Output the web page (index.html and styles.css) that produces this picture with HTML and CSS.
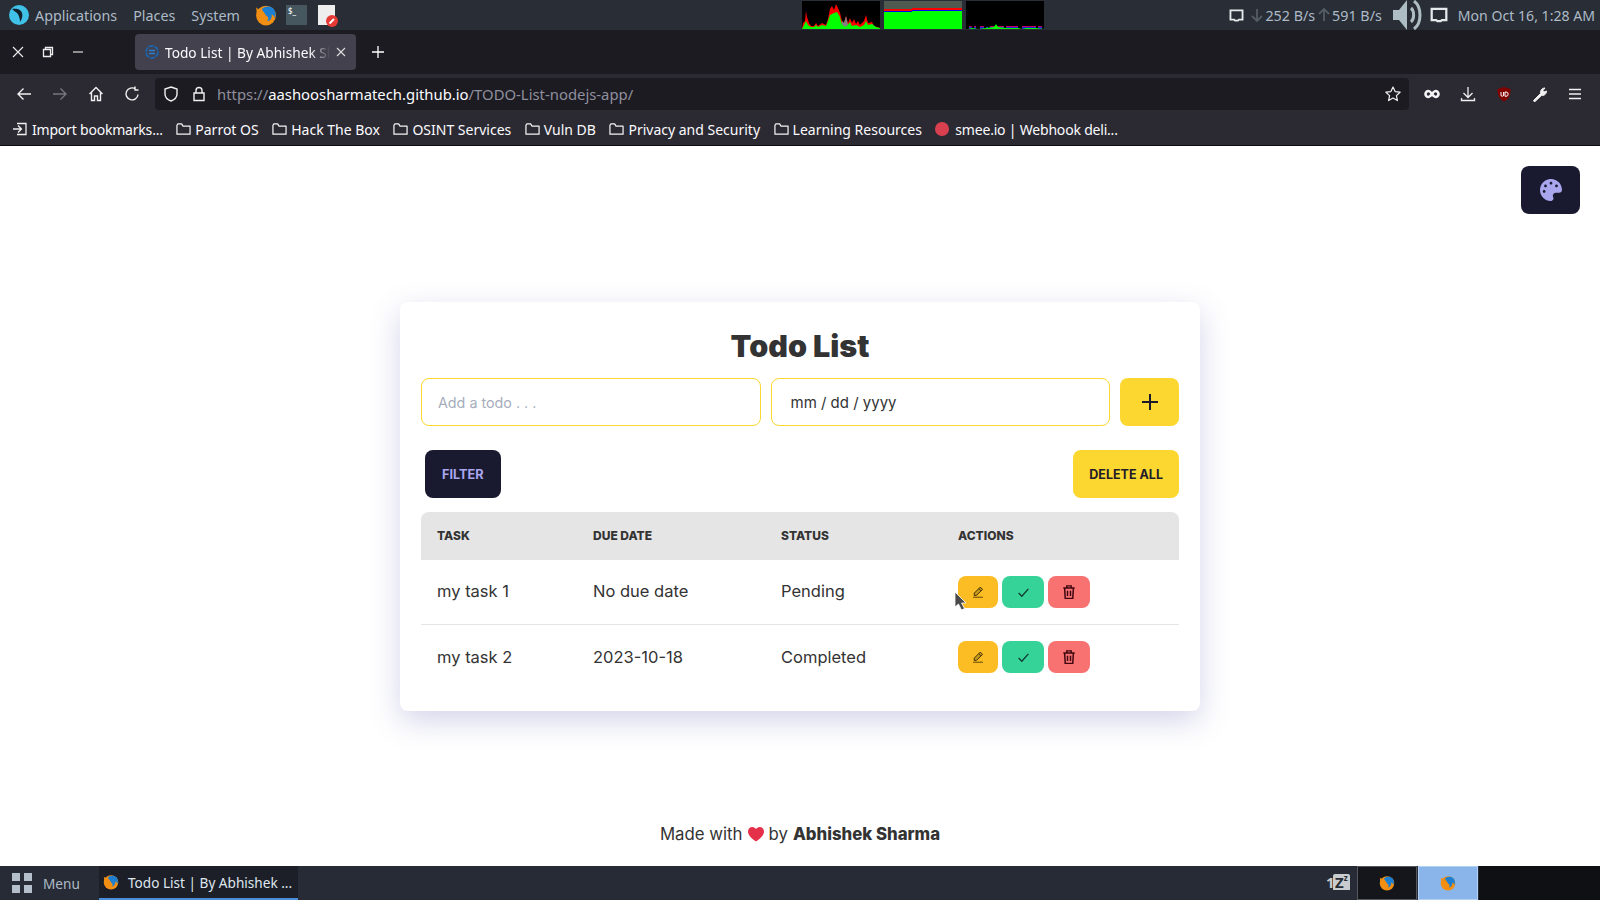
FILE: index.html
```html
<!DOCTYPE html>
<html lang="en">
<head>
  <meta charset="UTF-8" />
  <title>Todo List | By Abhishek Sharma</title>
  <link rel="stylesheet" href="styles.css">
</head>
<body>

  <svg class="defs" width="0" height="0">
    <symbol id="fox" viewBox="0 0 20 20">
      <circle cx="10" cy="10.500" r="9" fill="#f28f13"/>
      <path d="M6 5c2-3 8-4 11-.5 2 2.500 2 6 1 8-1-2-2-3-3-3 1 3-1 6-4 6 2-2 1-4-1-5-1-2-2-3-4-5.500z" fill="#1d7fd1"/>
      <path d="M1 3l3 3 3-1-2 4-3 2z" fill="#f28f13"/>
    </symbol>
    <symbol id="folder" viewBox="0 0 16 14">
      <path d="M1 3v9.500h14V4H7.500L6 1.500H2z" fill="none" stroke="#f5f5f5" stroke-width="1.300" stroke-linejoin="round"/>
    </symbol>
    <symbol id="screen" viewBox="0 0 16 14">
      <path d="M1.500 1.500h13v10h-4l-1 1h-3l-1-1h-4z" fill="none" stroke="#e6e9ec" stroke-width="2"/>
    </symbol>
    <symbol id="pen" viewBox="0 0 16 16">
      <path d="M11 1.500l3 3-8 8H3v-3z" fill="#c79a1d" stroke="#3a2a08" stroke-width="1.300" stroke-linejoin="round"/>
      <path d="M9 3.500l3 3" stroke="#3a2a08" stroke-width="1.200"/>
      <path d="M1.500 15h13" stroke="#7a5a0c" stroke-width="1.600"/>
    </symbol>
    <symbol id="tick" viewBox="0 0 16 16">
      <path d="M2 8.500l4 4L14 3.500" fill="none" stroke="#123d33" stroke-width="1.700"/>
    </symbol>
    <symbol id="trash" viewBox="0 0 16 16">
      <path d="M1.500 3.500h13M5.500 3.500V1h5v2.500M3 3.500l.7 12h8.600l.7-12M6.300 6.500v6M9.700 6.500v6" fill="none" stroke="#3f0710" stroke-width="1.700"/>
    </symbol>
    <symbol id="arrow" viewBox="0 0 12 14">
      <path d="M6 1v12M1 8l5 5 5-5" fill="none" stroke="#555c62" stroke-width="1.800"/>
    </symbol>
  </svg>

  <div class="panel">
    <div class="panel-left">
      <svg class="parrot" viewBox="0 0 20 20" width="20" height="20">
        <circle cx="10" cy="10" r="10" fill="#3fc1e8"/>
        <path d="M3 4c4-1 9 0 10 4 1 3 0 6-2 9 0-3-1-7-3-9-1-1-3-2-5-4z" fill="#14212b"/>
      </svg>
      <span>Applications</span>
      <span>Places</span>
      <span>System</span>
      <svg width="22" height="22"><use href="#fox"/></svg>
      <div class="term">$_</div>
      <div class="note">
        <svg class="note-badge" width="12" height="12" viewBox="0 0 12 12">
          <circle cx="6" cy="6" r="6" fill="#e53935"/>
          <path d="M3.500 8.500L8 4" stroke="#fff" stroke-width="2"/>
        </svg>
      </div>
    </div>
    <div class="graphs">
      <svg class="graph" viewBox="0 0 78 28" preserveAspectRatio="none">
        <polygon fill="#f00" points="0,28 1,22 3,20 4,10 5,16 7,22 9,25 12,25 14,22 16,25 20,22 24,24 26,18 28,8 30,5 32,9 34,3 36,7 38,12 40,20 42,22 44,15 46,22 48,17 50,22 52,18 54,23 56,20 58,24 62,20 64,14 66,22 70,21 72,25 78,27 78,28"/>
        <polygon fill="#808080" points="38,28 40,20 42,22 44,15 46,24 48,28"/>
        <polygon fill="#0f0" points="0,28 2,24 4,20 6,24 9,26 12,26 14,24 16,26 20,24 24,25 26,20 28,14 32,12 35,11 38,16 40,24 44,26 48,21 50,25 54,24 58,26 62,24 64,20 66,24 70,23 74,26 78,27 78,28"/>
      </svg>
      <svg class="graph" viewBox="0 0 78 28" preserveAspectRatio="none">
        <rect width="78" height="28" fill="#505a50"/>
        <rect y="8" width="28" height="2" fill="#f00"/>
        <rect y="10" width="28" height="1" fill="#00f"/>
        <rect y="11" width="28" height="17" fill="#0f0"/>
        <rect x="28" y="7" width="50" height="2" fill="#f00"/>
        <rect x="28" y="9" width="50" height="1" fill="#00f"/>
        <rect x="28" y="10" width="50" height="18" fill="#0f0"/>
      </svg>
      <svg class="graph" viewBox="0 0 78 28" preserveAspectRatio="none">
        <path d="M3 26v-1h3v1zM8 26v-1h2v1zM14 26v-1h4v1zM24 26v-1h14v1zM40 26v-1h12v1zM56 26v-1h14v1zM72 26v-1h4v1z" fill="#c00060"/>
        <path d="M3 28v-2h3v2zM8 28v-2h2v2zM14 28v-2h4v2zM20 28v-2h2v2zM24 28v-2h14v2zM40 28v-2h12v2zM56 28v-2h14v2zM72 28v-2h4v2z" fill="#2020d0"/>
        <polygon fill="#0f0" points="2,28 6,27 12,28 20,27 28,26 30,23 32,26 40,27 52,27 56,28 60,27 70,27 78,28"/>
      </svg>
    </div>
    <div class="panel-right">
      <svg width="15" height="13"><use href="#screen"/></svg>
      <span class="net">
        <svg width="12" height="14"><use href="#arrow"/></svg>
        <span>252 B/s</span>
        <svg class="arrow-up" width="12" height="14"><use href="#arrow"/></svg>
        <span>591 B/s</span>
      </span>
      <svg class="speaker" width="30" height="30" viewBox="0 0 30 30">
        <path d="M0 10h6l8-10v30l-8-10H0z" fill="#aebcc4"/>
        <path d="M18 8c3.500 3 3.500 11 0 14M21 1c8 6 8 22 0 28" fill="none" stroke="#aebcc4" stroke-width="3"/>
      </svg>
      <svg class="screen-big" width="18" height="16"><use href="#screen"/></svg>
      <span class="clock">Mon Oct 16, 1:28 AM</span>
    </div>
  </div>

  <div class="tabbar">
    <div class="win-btns">
      <svg width="12" height="12" viewBox="0 0 12 12"><path d="M1 1l10 10M11 1L1 11" stroke="#eee" stroke-width="1.100"/></svg>
      <svg width="12" height="12" viewBox="0 0 12 12"><path d="M1.500 3.500h7v7h-7zM3.500 3.500v-2h7v7h-2" fill="none" stroke="#eee" stroke-width="1.300"/></svg>
      <svg width="12" height="12" viewBox="0 0 12 12"><path d="M1 6h10" stroke="#eee" stroke-width="1.100"/></svg>
    </div>
    <div class="tab">
      <svg width="14" height="14" viewBox="0 0 14 14">
        <circle cx="7" cy="7" r="6" fill="none" stroke="#1f62a8" stroke-width="2" stroke-dasharray="5 1"/>
        <path d="M4 5.500h6M4 8.500h6" stroke="#2b7fd0" stroke-width="1.500"/>
      </svg>
      <span class="tab-title">Todo List | By Abhishek Sharma</span>
      <svg width="10" height="10" viewBox="0 0 10 10"><path d="M1 1l8 8M9 1L1 9" stroke="#ddd" stroke-width="1.100"/></svg>
    </div>
    <svg class="newtab" width="12" height="12" viewBox="0 0 12 12"><path d="M6 0v12M0 6h12" stroke="#fff" stroke-width="1.300"/></svg>
  </div>

  <div class="navbar">
    <div class="nav-btns">
      <svg width="16" height="16" viewBox="0 0 16 16"><path d="M15 8H2M7.500 2.500L2 8l5.500 5.500" fill="none" stroke="#f0f0f0" stroke-width="1.400"/></svg>
      <svg width="16" height="16" viewBox="0 0 16 16"><path d="M1 8h13M8.500 2.500L14 8l-5.500 5.500" fill="none" stroke="#77767c" stroke-width="1.400"/></svg>
      <svg width="16" height="16" viewBox="0 0 16 16"><path d="M1.500 8L8 1.500 14.500 8M3.500 6.500V14.500H6.500V10h3v4.500h3V6.500" fill="none" stroke="#f0f0f0" stroke-width="1.400"/></svg>
      <svg width="16" height="16" viewBox="0 0 16 16"><path d="M14 8.500A6 6 0 1 1 11.500 3M11 .5V4h3.500" fill="none" stroke="#f0f0f0" stroke-width="1.400"/></svg>
    </div>
    <div class="urlbar">
      <svg width="16" height="16" viewBox="0 0 16 16"><path d="M8 1l6 2v5c0 3-2 5.500-6 7-4-1.500-6-4-6-7V3z" fill="none" stroke="#f0f0f0" stroke-width="1.400"/></svg>
      <svg width="14" height="16" viewBox="0 0 14 16"><path d="M4 7V4.500a3 3 0 0 1 6 0V7M2 7h10v7.500H2z" fill="none" stroke="#f0f0f0" stroke-width="1.400"/></svg>
      <span class="url">https://<em>aashoosharmatech.github.io</em>/TODO-List-nodejs-app/</span>
      <svg width="16" height="16" viewBox="0 0 16 16"><path d="M8 1l2.100 4.600 5 .6-3.700 3.400 1 5L8 12.100l-4.400 2.500 1-5L.9 6.200l5-.6z" fill="none" stroke="#f0f0f0" stroke-width="1.200" stroke-linejoin="round"/></svg>
    </div>
    <div class="nav-tools">
      <svg width="16" height="16" viewBox="0 0 16 16"><path d="M4.500 5c3 0 4 6 7 6a3 3 0 0 0 0-6c-3 0-4 6-7 6a3 3 0 0 1 0-6z" fill="none" stroke="#f5f5f5" stroke-width="2.600"/></svg>
      <svg width="16" height="16" viewBox="0 0 16 16"><path d="M8 1v10M3.500 7L8 11.500 12.500 7M1.500 12v2.500h13V12" fill="none" stroke="#f0f0f0" stroke-width="1.300"/></svg>
      <svg width="16" height="16" viewBox="0 0 16 16">
        <path d="M8 1l6.500 2c0 6-1.500 10-6.500 12.500C3 13 1.500 9 1.500 3z" fill="#800000"/>
        <path d="M5 6v3a1.300 1.300 0 0 0 2.600 0V6M9 6h1a2 2 0 0 1 0 4.300H9z" fill="none" stroke="#fff" stroke-width="1"/>
      </svg>
      <svg width="16" height="16" viewBox="0 0 16 16"><path d="M1.500 14.500L8.500 7.500C8 5 9.500 2 13 2l-2 2.500 1 1.500 2.500-1c0 3-2.500 5-5 4.500l-7 6.500z" fill="#f0f0f0" stroke="#f0f0f0"/></svg>
      <svg width="14" height="12" viewBox="0 0 14 12"><path d="M1 1.500h12M1 6h12M1 10.500h12" stroke="#f0f0f0" stroke-width="1.300"/></svg>
    </div>
  </div>

  <div class="bookmarks">
    <span class="bm bm-tight">
      <svg width="16" height="14" viewBox="0 0 16 14"><path d="M1 7h8M6 3.500L9.500 7 6 10.500M5 1.500h9v11H5" fill="none" stroke="#f0f0f0" stroke-width="1.300"/></svg>
      Import bookmarks...
    </span>
    <span class="bm"><svg width="15" height="14"><use href="#folder"/></svg>Parrot OS</span>
    <span class="bm"><svg width="15" height="14"><use href="#folder"/></svg>Hack The Box</span>
    <span class="bm"><svg width="15" height="14"><use href="#folder"/></svg>OSINT Services</span>
    <span class="bm"><svg width="15" height="14"><use href="#folder"/></svg>Vuln DB</span>
    <span class="bm"><svg width="15" height="14"><use href="#folder"/></svg>Privacy and Security</span>
    <span class="bm"><svg width="15" height="14"><use href="#folder"/></svg>Learning Resources</span>
    <span class="bm bm-tight"><i class="smee"></i>smee.io | Webhook deli...</span>
  </div>

  <main class="page">
    <button class="theme-btn">
      <svg width="22" height="22" viewBox="0 0 512 512"><path fill="#a9a6ee" d="M204.300 5C104.900 24.400 24.800 104.300 5.200 203.400c-37 187 131.700 326.400 258.800 306.700 41.200-6.400 61.400-54.600 42.500-91.700-23.100-45.400 9.900-98.400 60.900-98.400h79.700c35.800 0 64.800-29.600 64.900-65.300C511.500 97.100 368.100-26.900 204.300 5zM96 320c-17.700 0-32-14.300-32-32s14.300-32 32-32 32 14.300 32 32-14.300 32-32 32zm32-128c-17.700 0-32-14.300-32-32s14.300-32 32-32 32 14.300 32 32-14.300 32-32 32zm128-64c-17.700 0-32-14.300-32-32s14.300-32 32-32 32 14.300 32 32-14.300 32-32 32zm128 64c-17.700 0-32-14.300-32-32s14.300-32 32-32 32 14.300 32 32-14.300 32-32 32z"/></svg>
    </button>

    <section class="card">
      <h1>Todo List</h1>
      <form class="todo-form">
        <input type="text" class="todo-input" placeholder="Add a todo . . .">
        <input type="text" class="todo-input date-input" value="mm / dd / yyyy">
        <button type="button" class="add-btn">
          <svg width="16" height="16" viewBox="0 0 16 16"><path d="M8 0v16M0 8h16" stroke="#1a1a2e" stroke-width="2"/></svg>
        </button>
      </form>
      <div class="controls">
        <button class="btn filter-btn">FILTER</button>
        <button class="btn delete-all-btn">DELETE ALL</button>
      </div>
      <table class="todos">
        <thead>
          <tr>
            <th class="col-task">TASK</th>
            <th class="col-date">DUE DATE</th>
            <th class="col-status">STATUS</th>
            <th>ACTIONS</th>
          </tr>
        </thead>
        <tbody>
          <tr>
            <td>my task 1</td>
            <td>No due date</td>
            <td>Pending</td>
            <td>
              <div class="actions">
                <button class="act act-edit"><svg width="12" height="12"><use href="#pen"/></svg></button>
                <button class="act act-done"><svg width="13" height="13"><use href="#tick"/></svg></button>
                <button class="act act-del"><svg width="14" height="14"><use href="#trash"/></svg></button>
              </div>
            </td>
          </tr>
          <tr>
            <td>my task 2</td>
            <td>2023-10-18</td>
            <td>Completed</td>
            <td>
              <div class="actions">
                <button class="act act-edit"><svg width="12" height="12"><use href="#pen"/></svg></button>
                <button class="act act-done"><svg width="13" height="13"><use href="#tick"/></svg></button>
                <button class="act act-del"><svg width="14" height="14"><use href="#trash"/></svg></button>
              </div>
            </td>
          </tr>
        </tbody>
      </table>
    </section>

    <footer class="credit">
      Made with
      <svg class="heart" width="16" height="15" viewBox="0 0 16 15"><path d="M8 14.500C3 11 0 8 0 4.500 0 2 2 0 4.300 0 6 0 7.300 1 8 2.200 8.700 1 10 0 11.700 0 14 0 16 2 16 4.500 16 8 13 11 8 14.500z" fill="#e5304a"/></svg>
      by <strong>Abhishek Sharma</strong>
    </footer>

    <svg class="cursor" width="14" height="20" viewBox="0 0 14 20"><path d="M1 1v15l3.500-3 3 6 3-1.500-3-5.500H12z" fill="#4a4a4a" stroke="#fff" stroke-width=".8"/></svg>
  </main>

  <div class="taskbar">
    <div class="menu">
      <span class="menu-grid"><i></i><i></i><i></i><i></i></span>
      Menu
    </div>
    <div class="task">
      <svg width="16" height="16"><use href="#fox"/></svg>
      Todo List | By Abhishek ...
    </div>
    <div class="tray">
      <span class="caffeine"><span class="caf-one">1</span><span class="caf-z">Z<sup>z</sup></span></span>
      <div class="workspace ws-idle"><svg width="16" height="16"><use href="#fox"/></svg></div>
      <div class="workspace ws-active"><svg width="16" height="16"><use href="#fox"/></svg></div>
      <div class="workspace-rest"></div>
    </div>
  </div>

</body>
</html>
```

FILE: styles.css
```css
body {
  margin: 0;
  height: 900px;
  display: flex;
  flex-direction: column;
  overflow: hidden;
  font-family: "Noto Sans", sans-serif;
  background: white;
}

.defs {
  position: absolute;
}

/* desktop panel */
.panel {
  height: 30px;
  background: #282d36;
  color: #aebbc6;
  font-size: 14.300px;
  display: flex;
  align-items: center;
  justify-content: space-between;
  padding: 0 5px 0 9px;
  position: relative;
}

.panel-left {
  display: flex;
  align-items: center;
}

.panel-left > span {
  margin-left: 16px;
}

.panel-left > span:first-of-type {
  margin-left: 6px;
}

.panel-left > svg:nth-of-type(2) {
  margin-left: 15px;
}

.term {
  width: 21px;
  height: 20px;
  margin-left: 9px;
  background: #46575f;
  color: white;
  font-size: 8px;
  line-height: 12px;
  padding-left: 2px;
  box-sizing: border-box;
}

.note {
  width: 17px;
  height: 20px;
  margin-left: 11px;
  background: #eee;
  position: relative;
}

.note-badge {
  position: absolute;
  right: -3px;
  bottom: -2px;
}

.graphs {
  position: absolute;
  left: 802px;
  top: 1px;
  display: flex;
  gap: 4px;
}

.graph {
  width: 78px;
  height: 28px;
  background: black;
  display: block;
}

.panel-right {
  display: flex;
  align-items: center;
}

.net {
  margin-left: 7px;
  display: flex;
  align-items: center;
  gap: 2.500px;
  white-space: nowrap;
}

.arrow-up {
  transform: rotate(180deg);
}

.speaker {
  margin-left: 11px;
}

.screen-big {
  margin-left: 7px;
}

.clock {
  margin-left: 10px;
  font-size: 14.100px;
}

/* browser */
.tabbar {
  height: 44px;
  background: #1c1b22;
  display: flex;
  align-items: center;
}

.win-btns {
  width: 135px;
  display: flex;
  gap: 18px;
  padding-left: 12px;
  box-sizing: border-box;
}

.tab {
  width: 221px;
  height: 36px;
  background: #42414d;
  border-radius: 4px;
  display: flex;
  align-items: center;
  gap: 6px;
  padding: 0 10px;
  box-sizing: border-box;
  color: #fbfbfe;
  font-size: 13.700px;
}

.tab-title {
  flex: 1;
  white-space: nowrap;
  overflow: hidden;
  -webkit-mask-image: linear-gradient(to right, black 88%, transparent);
  mask-image: linear-gradient(to right, black 88%, transparent);
}

.newtab {
  margin-left: 16px;
}

.navbar {
  height: 37px;
  background: #2b2a33;
  display: flex;
  align-items: center;
  box-sizing: border-box;
  padding-top: 3px;
}

.nav-btns {
  width: 155px;
  display: flex;
  gap: 20px;
  padding-left: 16px;
  box-sizing: border-box;
}

.urlbar {
  width: 1254px;
  height: 32px;
  background: #1c1b22;
  border-radius: 4px;
  display: flex;
  align-items: center;
  padding: 0 8px;
  box-sizing: border-box;
  color: #8f8f9d;
  font-size: 14.850px;
}

.urlbar svg:nth-of-type(2) {
  margin-left: 13px;
}

.url {
  flex: 1;
  margin-left: 11px;
}

.url em {
  font-style: normal;
  color: #fbfbfe;
}

.nav-tools {
  display: flex;
  align-items: center;
  gap: 20px;
  padding-left: 15px;
}

.bookmarks {
  height: 35px;
  background: #2b2a33;
  border-bottom: 1px solid #0c0c0d;
  box-sizing: border-box;
  display: flex;
  align-items: center;
  gap: 13.500px;
  padding: 2px 0 0 12px;
  color: #fbfbfe;
  font-size: 14px;
}

.bm {
  display: flex;
  align-items: center;
  gap: 4px;
  white-space: nowrap;
}

.bm-tight {
  letter-spacing: -0.2px;
}

.smee {
  width: 14px;
  height: 14px;
  border-radius: 50%;
  background: #d9404f;
  margin-right: 2px;
}

/* page */
.page {
  flex: 1;
  position: relative;
  display: flex;
  flex-direction: column;
  padding-top: 156px;
  font-family: Inter, sans-serif;
  color: #333;
}

.theme-btn {
  position: absolute;
  top: 20px;
  right: 20px;
  width: 59px;
  height: 48px;
  border: none;
  border-radius: 8px;
  background: #191a2f;
  display: flex;
  align-items: center;
  justify-content: center;
}

.card {
  width: 800px;
  height: 409px;
  margin: 0 auto;
  padding: 20px 21px;
  box-sizing: border-box;
  background: white;
  border-radius: 8px;
  box-shadow: 0 10px 30px rgba(96, 100, 180, 0.28);
}

h1 {
  margin: 0 0 8px 0;
  font-size: 30.500px;
  line-height: 48px;
  font-weight: 900;
  text-align: center;
}

.todo-form {
  display: flex;
  gap: 10px;
}

.todo-input {
  flex: 1;
  min-width: 0;
  height: 48px;
  padding: 0 16px;
  box-sizing: border-box;
  border: 1px solid #fbd72f;
  border-radius: 8px;
  font-family: Inter, sans-serif;
  font-size: 15px;
  color: #333;
}

.todo-input::placeholder {
  color: #a6adbb;
  font-size: 14.300px;
}

.date-input {
  text-indent: 3px;
}

.add-btn {
  width: 59px;
  height: 48px;
  border: none;
  border-radius: 8px;
  background: #fbd72f;
  display: flex;
  align-items: center;
  justify-content: center;
}

.controls {
  display: flex;
  justify-content: space-between;
  margin-top: 24px;
  padding-left: 4px;
}

.btn {
  height: 48px;
  padding: 0 17px;
  border: none;
  border-radius: 8px;
  font-family: Inter, sans-serif;
  font-size: 12.700px;
  font-weight: 700;
}

.filter-btn {
  background: #191a2f;
  color: #a9a6ee;
}

.delete-all-btn {
  padding: 0 16px;
  font-size: 12.500px;
  background: #fbd72f;
  color: #241c2a;
}

.todos {
  width: 100%;
  margin-top: 14px;
  border-collapse: collapse;
  table-layout: fixed;
}

.todos th {
  height: 48px;
  padding: 0 0 2px 16px;
  box-sizing: border-box;
  background: #e5e5e5;
  font-size: 12px;
  font-weight: 800;
  text-align: left;
}

.todos th:first-child {
  border-radius: 8px 0 0 0;
}

.todos th:last-child {
  border-radius: 0 8px 0 0;
}

.col-task {
  width: 156px;
}

.col-date {
  width: 188px;
}

.col-status {
  width: 177px;
}

.todos td {
  height: 64px;
  padding: 0 0 0 16px;
  font-size: 16.500px;
}

.todos tbody tr:first-child td {
  border-bottom: 1px solid #e5e5e5;
}

.todos tbody tr:first-child td:not(:last-child) {
  height: 62px;
  padding-bottom: 2px;
}

.actions {
  display: flex;
  gap: 4px;
}

.act {
  width: 42px;
  height: 32px;
  padding: 0;
  border: none;
  border-radius: 8px;
  display: flex;
  align-items: center;
  justify-content: center;
}

.act-edit {
  width: 40px;
  background: #fbbd23;
}

.act-done {
  background: #36d399;
}

.act-del {
  background: #f87272;
}

.credit {
  margin-top: auto;
  padding-bottom: 21px;
  display: flex;
  justify-content: center;
  align-items: center;
  gap: 5px;
  font-size: 16.800px;
  line-height: 22px;
}

.credit strong {
  font-weight: 800;
}

.heart {
  margin-top: 1px;
}

.cursor {
  position: absolute;
  left: 954px;
  top: 445px;
}

/* bottom taskbar */
.taskbar {
  height: 34px;
  background: #272b35;
  display: flex;
  align-items: center;
  color: #aebbc6;
  font-size: 13.600px;
}

.menu {
  width: 99px;
  display: flex;
  align-items: center;
  gap: 11px;
  padding-left: 12px;
  box-sizing: border-box;
}

.menu-grid {
  display: grid;
  grid-template-columns: 8px 8px;
  gap: 4px;
}

.menu-grid i {
  height: 8px;
  background: #b5bfcc;
}

.task {
  width: 199px;
  height: 34px;
  background: #1c1f28;
  border-bottom: 2px solid #4a90d9;
  box-sizing: border-box;
  display: flex;
  align-items: center;
  gap: 9px;
  padding-left: 4px;
  color: #dfe6ee;
  white-space: nowrap;
}

.tray {
  margin-left: auto;
  display: flex;
  align-items: center;
}

.caffeine {
  display: flex;
  align-items: flex-start;
  height: 19px;
  margin-right: 7px;
  font-weight: bold;
  font-size: 15px;
  line-height: 16px;
}

.caf-one {
  width: 7px;
  color: #c8cccf;
}

.caf-z {
  width: 17px;
  height: 16px;
  box-sizing: border-box;
  background: #c8cccf;
  border-bottom: 3px dashed #c8cccf;
  color: #272b35;
  padding-left: 2px;
  border-radius: 2px 2px 0 0;
}

.caf-z sup {
  font-size: 8px;
  line-height: 8px;
  vertical-align: top;
}

.workspace {
  width: 60px;
  height: 34px;
  box-sizing: border-box;
  display: flex;
  align-items: center;
  justify-content: center;
  margin-right: 1px;
}

.ws-idle {
  background: #14161b;
  border: 1px solid #55595f;
}

.ws-active {
  background: #8ab5ea;
  border: 1px solid #b3d0f2;
}

.workspace-rest {
  width: 121px;
  height: 34px;
  background: #0f1014;
}
```
